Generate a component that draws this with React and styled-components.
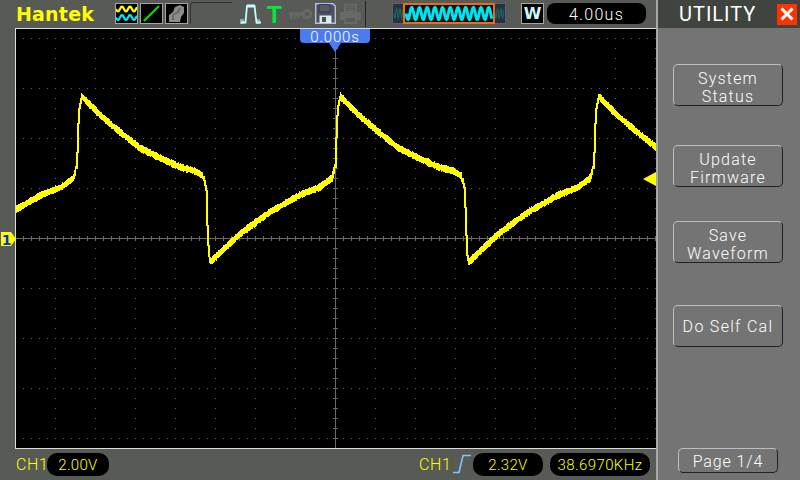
import React from 'react';
import styled, { createGlobalStyle } from 'styled-components';

const Global = createGlobalStyle`
  html, body { margin: 0; padding: 0; background: #585a56; overflow: hidden; }
  #root { width: 800px; height: 480px; }
`;

const FONT = `"Roboto", "Liberation Sans", sans-serif`;

const Page = styled.div`
  width: 800px; height: 480px; display: grid; grid-template-columns: 656px 144px;
  font-family: ${FONT}; font-weight: 300; color: #fff; overflow: hidden;
`;
const Main = styled.div`
  display: flex; flex-direction: column; background: #585a56; min-width: 0;
`;
const TopBar = styled.div`
  height: 28px; flex: none; display: flex; align-items: flex-start; padding-top: 3px; box-sizing: border-box;
`;
const Logo = styled.div`
  width: 99px; margin-left: 16px; height: 21px; line-height: 22px; flex: none;
  font-family: "DejaVu Sans", sans-serif; font-weight: 700; font-size: 19px; letter-spacing: .2px; color: #ffff00;
`;
const IconBox = styled.div`
  width: 23px; height: 21px; box-sizing: border-box; flex: none; margin-right: ${p => p.$mr || 2}px;
  border: 1px solid #a4a6a2; background: #000; display: flex; align-items: center; justify-content: center;
  font-family: "DejaVu Sans", sans-serif; font-weight: 700; font-size: 16px; color: #c8fbff;
`;
const Bracket = styled.div`
  width: 42px; height: 22px; flex: none; margin-top: -1px; margin-right: 8px; box-sizing: border-box;
  border-left: 1px solid #333; border-top: 1px solid #333; border-top-left-radius: 4px;
`;
const StatusIcon = styled.svg`
  width: ${p => p.$w}px; height: 21px; flex: none; margin-right: ${p => p.$mr}px;
`;
const TrigT = styled.div`
  width: 14px; margin-right: 8px; flex: none; line-height: 23px; font-family: "Liberation Sans", sans-serif;
  font-weight: 700; font-size: 24px; color: #00e83a;
`;
const Divider = styled.div`
  width: 1px; height: 26px; margin-top: -2px; margin-right: 26px; background: #222; flex: none;
`;
const Overview = styled.svg`
  width: 114px; height: 21px; flex: none; margin-right: 15px;
`;
const TimePill = styled.div`
  width: 99px; height: 21px; margin-left: 2px; border-radius: 8px; background: #000; text-align: center;
  line-height: 24px; font-size: 16px; letter-spacing: 1.3px; flex: none;
`;
const Screen = styled.div`
  height: 421px; flex: none; margin-left: 15px; box-sizing: border-box; position: relative;
  border: 1px solid #dcdcd8; border-right: none; background: #000;
`;
const ScreenArt = styled.svg`
  display: block; width: 640px; height: 419px;
`;
const TimeMarker = styled.div`
  position: absolute; left: 284px; top: 0; width: 70px; height: 14px; background: #4a7cf0;
  border-radius: 0 0 4px 4px; text-align: center; font-size: 15px; line-height: 16px; letter-spacing: .8px;
  &::after {
    content: ""; position: absolute; left: 29px; top: 14px; border: 6px solid transparent; border-bottom: none;
    border-top: 9px solid #4a7cf0;
  }
`;
const ChannelMarker = styled.svg`
  position: absolute; left: -15px; top: 202px; width: 16px; height: 16px;
`;
const LevelMarker = styled.div`
  position: absolute; right: 0; top: 143px; width: 0; height: 0; border: 7px solid transparent;
  border-left: none; border-right: 13px solid #ffff00;
`;
const BottomBar = styled.div`
  flex: 1; display: flex; align-items: flex-start; padding: 4px 0 0 16px; color: #ffff00;
`;
const ChLabel = styled.div`
  width: ${p => p.$w}px; flex: none; line-height: 23px; font-size: 16px; letter-spacing: .6px;
`;
const ValuePill = styled.div`
  width: ${p => p.$w}px; height: 23px; flex: none; margin-right: ${p => p.$mr || 0}px; border-radius: 10px; background: #000;
  text-align: center; line-height: 24px; font-size: 15px; letter-spacing: ${p => p.$ls || 0}px;
`;
const Spacer = styled.div`
  flex: 1;
`;
const EdgeIcon = styled.svg`
  width: 20px; height: 23px; flex: none;
`;
const Side = styled.div`
  display: flex; flex-direction: column; align-items: center; background: #747474;
  border-left: 2px solid #a8a8a8; box-sizing: border-box; padding-bottom: 7px;
`;
const SideHeader = styled.div`
  height: 28px; width: 100%; flex: none; background: #3f443f; display: flex; align-items: center; box-sizing: border-box;
  padding: 0 3px 0 21px; justify-content: space-between;
`;
const Title = styled.div`
  font-size: 20px; letter-spacing: 1px; font-weight: 400;
`;
const CloseBox = styled.div`
  width: 20px; height: 21px; background: #ff3300; display: flex; align-items: center; justify-content: center;
`;
const SoftButton = styled.div`
  width: 110px; height: 42px; box-sizing: border-box; flex: none; margin-top: ${p => p.$mt}px; margin-right: 2px;
  border: 1px solid; border-color: #bdbdbd #222 #222 #bdbdbd; border-radius: 5px;
  padding-top: ${p => p.$pt || 2}px;
  display: flex; align-items: center; justify-content: center; text-align: center;
  font-size: 16px; line-height: 18px; letter-spacing: ${p => p.$ls || 1.2}px; white-space: pre-line;
`;
const PageButton = styled(SoftButton)`
  width: 100px; height: 25px; margin-top: auto; margin-right: 2px; letter-spacing: .9px;
`;

const KEY = [[81.5,96],[100,115],[120,132],[140,148],[160,158],[180,167],[195,171],[203,176],[206,190],[207,225],[208.5,255],[210.5,262],[225,248],[240,234],[270,212],[300,195],[320,187],[332,178],[335,167],[336.5,123],[337.5,108],[340,96]];
const PERIOD = 258.5;
const wave = x => {
  let t = x;
  while (t < 81.5) t += PERIOD;
  while (t >= 340) t -= PERIOD;
  for (let i = 0; i < KEY.length - 1; i++) {
    const [a, ya] = KEY[i]; const [b, yb] = KEY[i + 1];
    if (t >= a && t <= b) return ya + (yb - ya) * (t - a) / (b - a);
  }
  return 200;
};
const noise = x => { const s = Math.sin(x * 12.9898) * 43758.5453; return s - Math.floor(s); };
const tracePath = () => {
  let d = '';
  for (let x = 16; x < 656; x++) {
    const a = wave(x); const b = wave(x + 1);
    const steep = Math.abs(a - b) > 4;
    const band = steep ? 0.5 : 2.4 + noise(x) * 1.5;
    const top = (Math.min(a, b) - band).toFixed(0);
    const bottom = (Math.max(a, b) + band).toFixed(0);
    d += `M${x + .5} ${top}V${bottom}`;
    if (steep && x + 1 < 656) d += `M${x + 1.5} ${top}V${bottom}`;
  }
  return d;
};
const gridDots = () => {
  let d = '';
  for (let y = 38; y <= 438; y += 50) for (let x = 23; x <= 655; x += 8) d += `M${x} ${y}h1`;
  for (let x = 55; x <= 655; x += 40) for (let y = 38; y <= 438; y += 10) if (y % 50 !== 38 % 50) d += `M${x} ${y}h1`;
  return d;
};
const axes = () => {
  let d = 'M16 238.5H656M335.5 29V448';
  for (let x = 23; x <= 655; x += 8) d += `M${x + .5} 236V241`;
  for (let y = 38; y <= 438; y += 10) d += `M333 ${y + .5}H338`;
  return d;
};
const sine = (x0, x1, yc, amp, per) => {
  let d = '';
  for (let x = x0; x <= x1; x += .5) d += `${d ? 'L' : 'M'}${x} ${(yc + Math.sin((x - x0) / per * 2 * Math.PI) * amp).toFixed(2)}`;
  return d;
};

export default function App() {
  return (
    <Page>
      <Global />
      <Main>
        <TopBar>
          <Logo>Hantek</Logo>
          <IconBox>
            <svg width="21" height="19" viewBox="0 0 21 19" fill="none" strokeWidth="2.2">
              <path d={sine(0, 21, 5, 2.4, 8)} stroke="#ffff00" />
              <path d={sine(0, 21, 13.5, 2.4, 8)} stroke="#00e8f8" />
            </svg>
          </IconBox>
          <IconBox>
            <svg width="21" height="19" viewBox="0 0 21 19"><path d="M3 17L18 2" stroke="#00d800" strokeWidth="2.4" /></svg>
          </IconBox>
          <IconBox>
            <svg width="21" height="19" viewBox="0 0 21 19"><path d="M3 18L3 11L7 8L9 3L14 1L18 3L18 9L15 13L14 18Z" fill="#8c8c8c" /><path d="M7 16L7 11L12 8L14 4" stroke="#6a6a6a" strokeWidth="2" fill="none" /></svg>
          </IconBox>
          <Bracket />
          <StatusIcon $w={22} $mr={5} viewBox="0 0 22 21" fill="none">
            <path d="M1 19.5H5.5L7 3H14.5L16.5 19.5H21" stroke="#c8fbff" strokeWidth="1.8" />
            <path d="M8 1V5M10 1V5M12 1V5M14 1V5M1 16V21M3 16V21M17 16V21M19 16V21" stroke="#c8fbff" strokeWidth="1" />
          </StatusIcon>
          <TrigT>T</TrigT>
          <StatusIcon $w={23} $mr={3} viewBox="0 0 23 21" fill="none">
            <circle cx="18" cy="11" r="3.8" stroke="#666864" strokeWidth="3" />
            <path d="M0 11H14" stroke="#666864" strokeWidth="3.6" />
            <path d="M2 12V16.5M5.5 12V16.5M9 12V15.5" stroke="#666864" strokeWidth="2.2" />
          </StatusIcon>
          <StatusIcon $w={21} $mr={4} viewBox="0 0 21 21" fill="none">
            <path d="M.7 .7H18L20.3 3V20.3H.7Z" stroke="#b9bde0" strokeWidth="1.4" fill="#4e5058" />
            <path d="M4 1.5H15V9H4Z" fill="#5a5c58" stroke="#30347a" />
            <path d="M4.5 12.5H16.5V20H4.5Z" fill="#d8ece8" /><path d="M7 14H11V19H7Z" fill="#4e5058" />
          </StatusIcon>
          <StatusIcon $w={21} $mr={4} viewBox="0 0 21 21" fill="none">
            <path d="M5 1.7H16V9H5Z" stroke="#686a66" strokeWidth="1.8" />
            <path d="M7 4.2H14M7 6.7H14" stroke="#686a66" />
            <path d="M1 10H20V16.5H1Z" fill="#686a66" stroke="#686a66" strokeWidth="1.6" />
            <path d="M5 14H16V20H5Z" fill="#585a56" stroke="#686a66" strokeWidth="1.8" />
          </StatusIcon>
          <Divider />
          <Overview viewBox="0 0 114 21" fill="none">
            <rect x=".5" y=".5" width="113" height="20" fill="#2b3335" stroke="#5a5a90" />
            <path d={sine(2, 11, 10.5, 5, 3.4)} stroke="#107078" strokeWidth="1" />
            <path d={sine(103, 112, 10.5, 5, 3.4)} stroke="#107078" strokeWidth="1" />
            <rect x="12" y="1" width="90" height="19" fill="#0a1414" stroke="#f06a1c" strokeWidth="2" />
            <path d={sine(14, 100, 10.5, 6, 7.7)} stroke="#00e4f0" strokeWidth="3" />
          </Overview>
          <IconBox $mr={1}>W</IconBox>
          <TimePill>4.00us</TimePill>
        </TopBar>
        <Screen>
          <ScreenArt viewBox="16 29 640 419" fill="none">
            <path d={gridDots()} stroke="#5e5e5e" strokeWidth="1" shapeRendering="crispEdges" transform="translate(0 .5)" />
            <path d={axes()} stroke="#6a6a6a" strokeWidth="1" shapeRendering="crispEdges" />
            <path d={tracePath()} stroke="#ffff00" strokeWidth="1" shapeRendering="crispEdges" />
          </ScreenArt>
          <TimeMarker>0.000s</TimeMarker>
          <ChannelMarker viewBox="0 0 16 16">
            <path d="M0 1H10L15 8L10 15H0Z" fill="#ffff00" />
            <text x="5.5" y="13.5" textAnchor="middle" fontFamily="DejaVu Sans" fontWeight="700" fontSize="14" fill="#0030e0">1</text>
          </ChannelMarker>
          <LevelMarker />
        </Screen>
        <BottomBar>
          <ChLabel $w={31}>CH1</ChLabel>
          <ValuePill $w={62} $ls={.3}>2.00V</ValuePill>
          <Spacer />
          <ChLabel $w={34}>CH1</ChLabel>
          <EdgeIcon viewBox="0 0 20 23" fill="none">
            <path d="M0 19.5H6L10 2.5H18" stroke="#7ac8ff" strokeWidth="1.6" />
          </EdgeIcon>
          <ValuePill $w={70} $mr={7} $ls={.3}>2.32V</ValuePill>
          <ValuePill $w={100} $mr={6} $ls={.4}>38.6970KHz</ValuePill>
        </BottomBar>
      </Main>
      <Side>
        <SideHeader>
          <Title>UTILITY</Title>
          <CloseBox>
            <svg width="14" height="14" viewBox="0 0 14 14"><path d="M1.5 1.5L12.5 12.5M12.5 1.5L1.5 12.5" stroke="#fff" strokeWidth="3" /></svg>
          </CloseBox>
        </SideHeader>
        <SoftButton $mt={36} $pt={6}>{'System\nStatus'}</SoftButton>
        <SoftButton $mt={39} $pt={6}>{'Update\nFirmware'}</SoftButton>
        <SoftButton $mt={34} $pt={6}>{'Save\nWaveform'}</SoftButton>
        <SoftButton $mt={42} $ls={1.3}>Do Self Cal</SoftButton>
        <PageButton>Page 1/4</PageButton>
      </Side>
    </Page>
  );
}
